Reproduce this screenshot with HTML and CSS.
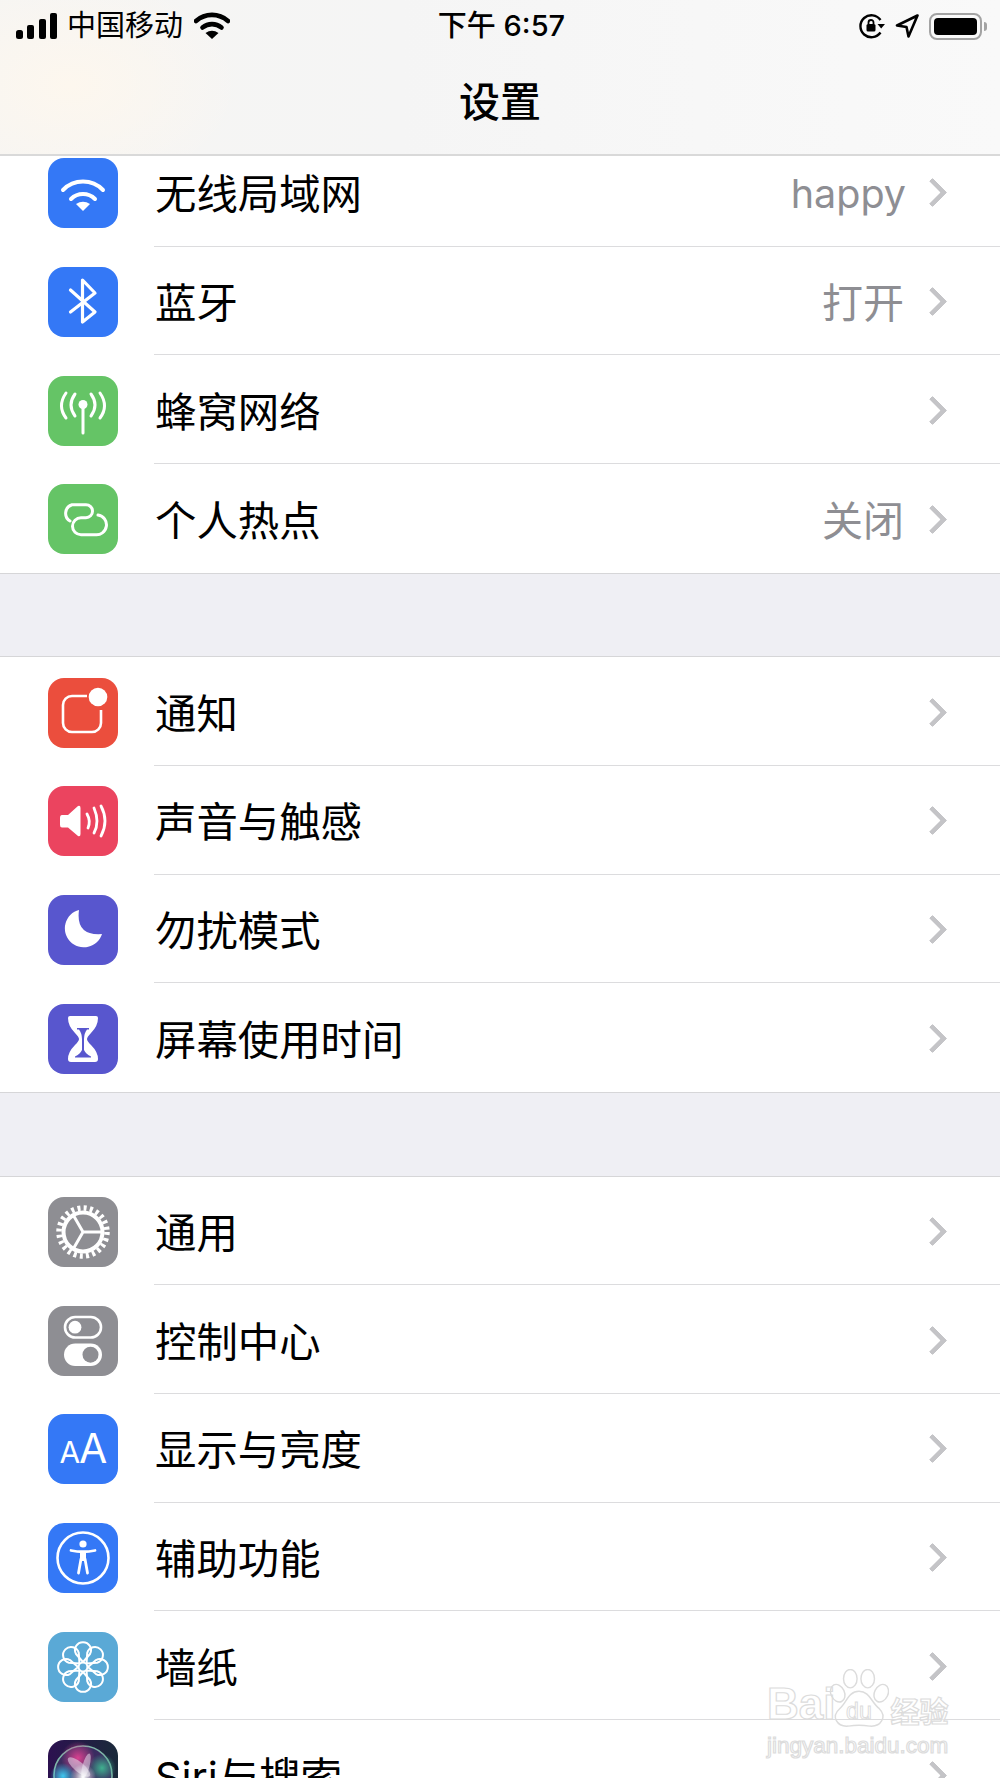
FILE: index.html
```html
<!DOCTYPE html>
<html lang="zh-CN">
<head>
    <meta charset="UTF-8">
    <meta name="viewport" content="width=device-width, initial-scale=1.0">
    <title>设置</title>
    <link rel="stylesheet" href="styles.css">
</head>
<body>
    <div class="screen">
        <header class="topbar">
            <div class="status">
                <div class="status-left">
                    <svg class="signal" width="42" height="26" viewBox="0 0 42 26">
                        <rect x="0" y="17" width="7" height="9" rx="2.5"/>
                        <rect x="11" y="12" width="7" height="14" rx="2"/>
                        <rect x="23" y="6" width="7" height="20" rx="2"/>
                        <rect x="34" y="0" width="7" height="26" rx="2"/>
                    </svg>
                    <span class="carrier">中国移动</span>
                    <svg class="status-wifi" width="36" height="28" viewBox="0 0 36 28">
                        <path d="M2 9 A24 24 0 0 1 34 9" fill="none" stroke="#000" stroke-width="4.6" stroke-linecap="round"/>
                        <path d="M8.5 15.5 A15 15 0 0 1 27.5 15.5" fill="none" stroke="#000" stroke-width="4.6" stroke-linecap="round"/>
                        <path d="M18 27 L11.5 21 Q18 16.5 24.5 21 Z"/>
                    </svg>
                </div>
                <span class="clock">下午 6:57</span>
                <div class="status-right">
                    <svg width="28" height="26" viewBox="0 0 28 26">
                        <path d="M22.5 7 A11 11 0 1 0 22.5 19.5" fill="none" stroke="#000" stroke-width="2.4"/>
                        <path d="M19.5 11 H27 L23.2 15.5 Z"/>
                        <rect x="8.5" y="11" width="9" height="7.5" rx="1.5"/>
                        <path d="M10.5 11 V9.5 A2.5 2.5 0 0 1 15.5 9.5 V11" fill="none" stroke="#000" stroke-width="1.8"/>
                    </svg>
                    <svg class="arrow" width="24" height="26" viewBox="0 0 24 26">
                        <path d="M22.5 2.5 L2 12.5 L11.5 14 L13.5 23.5 Z" fill="none" stroke="#000" stroke-width="2.6" stroke-linejoin="round"/>
                    </svg>
                    <div class="battery"><div class="battery-fill"></div></div>
                    <div class="battery-cap"></div>
                </div>
            </div>
            <h1 class="title">设置</h1>
        </header>

        <main class="list">
            <section class="group">
                <div class="row">
                    <svg class="icon" viewBox="0 0 70 70">
                        <rect width="70" height="70" rx="16" fill="#3478f6"/>
                        <g fill="none" stroke="#fff" stroke-width="4" stroke-linecap="round">
                            <path d="M15 32 A28 28 0 0 1 55 32"/>
                            <path d="M23 41 A17 17 0 0 1 47 41"/>
                        </g>
                        <path d="M35 53 L28 46 Q35 41.5 42 46 Z" fill="#fff"/>
                    </svg>
                    <div class="row-body">
                        <span class="label">无线局域网</span>
                        <span class="value value-latin">happy</span>
                        <span class="chevron"></span>
                    </div>
                </div>
                <div class="row">
                    <svg class="icon" viewBox="0 0 70 70">
                        <rect width="70" height="70" rx="16" fill="#3478f6"/>
                        <path d="M22.5 23 L47 45 L34.5 55 V13 L47 26 L22.5 45" fill="none" stroke="#fff" stroke-width="3.2" stroke-linecap="round" stroke-linejoin="round"/>
                    </svg>
                    <div class="row-body">
                        <span class="label">蓝牙</span>
                        <span class="value">打开</span>
                        <span class="chevron"></span>
                    </div>
                </div>
                <div class="row">
                    <svg class="icon" viewBox="0 0 70 70">
                        <rect width="70" height="70" rx="16" fill="#65c466"/>
                        <circle cx="35" cy="28.5" r="4.5" fill="#fff"/>
                        <g fill="none" stroke="#fff" stroke-width="3" stroke-linecap="round">
                            <path d="M35 30 V57"/>
                            <path d="M27 18 Q19 29 27 40"/>
                            <path d="M18 17 Q9 30 18 42"/>
                            <path d="M43 18 Q51 29 43 40"/>
                            <path d="M52 17 Q61 30 52 42"/>
                        </g>
                    </svg>
                    <div class="row-body">
                        <span class="label">蜂窝网络</span>
                        <span class="chevron"></span>
                    </div>
                </div>
                <div class="row">
                    <svg class="icon" viewBox="0 0 70 70">
                        <rect width="70" height="70" rx="16" fill="#65c466"/>
                        <path d="M22 37 A9 9 0 0 1 24 20.7 H38 A6.5 6.5 0 0 1 38 33.7 H33 A8.5 8.5 0 0 0 33 50.7 H47 A9.5 9.5 0 0 0 50 31" fill="none" stroke="#fff" stroke-width="3" stroke-linecap="round"/>
                    </svg>
                    <div class="row-body">
                        <span class="label">个人热点</span>
                        <span class="value">关闭</span>
                        <span class="chevron"></span>
                    </div>
                </div>
            </section>

            <section class="group">
                <div class="row">
                    <svg class="icon" viewBox="0 0 70 70">
                        <rect width="70" height="70" rx="16" fill="#eb4e3d"/>
                        <path d="M39 18 H24 A9 9 0 0 0 15 27 V45 A9 9 0 0 0 24 54 H44 A9 9 0 0 0 53 45 V32" fill="none" stroke="#fff" stroke-width="2.6"/>
                        <circle cx="50" cy="19" r="9.3" fill="#fff"/>
                    </svg>
                    <div class="row-body">
                        <span class="label">通知</span>
                        <span class="chevron"></span>
                    </div>
                </div>
                <div class="row">
                    <svg class="icon" viewBox="0 0 70 70">
                        <rect width="70" height="70" rx="16" fill="#eb445f"/>
                        <path d="M14 29 H20 L30 20 Q32.5 19 32.5 22 V48 Q32.5 51 30 50 L20 41.5 H14 Q12 41.5 12 39 V32 Q12 29 14 29 Z" fill="#fff"/>
                        <g fill="none" stroke="#fff" stroke-width="2.8" stroke-linecap="round">
                            <path d="M39 28 Q43 35 40 42"/>
                            <path d="M46 22 Q52 36 46 47"/>
                            <path d="M53 20 Q61 35 53 50"/>
                        </g>
                    </svg>
                    <div class="row-body">
                        <span class="label">声音与触感</span>
                        <span class="chevron"></span>
                    </div>
                </div>
                <div class="row">
                    <svg class="icon" viewBox="0 0 70 70">
                        <rect width="70" height="70" rx="16" fill="#5856ce"/>
                        <path d="M31 15 A19 19 0 1 0 54 39 Q27.5 41 31 15 Z" fill="#fff"/>
                    </svg>
                    <div class="row-body">
                        <span class="label">勿扰模式</span>
                        <span class="chevron"></span>
                    </div>
                </div>
                <div class="row">
                    <svg class="icon" viewBox="0 0 70 70">
                        <rect width="70" height="70" rx="16" fill="#5856ce"/>
                        <path d="M22 12 H48 Q50 12 50 14 Q50 22 43 29 Q39 33 39 35 Q39 37 43 41 Q50 48 50 55 Q50 58 47 58 H23 Q20 58 20 55 Q20 48 27 41 Q31 37 31 35 Q31 33 27 29 Q20 22 20 14 Q20 12 22 12 Z" fill="#fff"/>
                        <path d="M29 24 H41 V25.5 H39 Q36.2 29 36 35 V46 Q38 50 43 52.5 V53.5 H27 V52.5 Q32 50 34 46 V35 Q33.8 29 31 25.5 H29 Z" fill="#5856ce"/>
                    </svg>
                    <div class="row-body">
                        <span class="label">屏幕使用时间</span>
                        <span class="chevron"></span>
                    </div>
                </div>
            </section>

            <section class="group">
                <div class="row">
                    <svg class="icon" viewBox="0 0 70 70">
                        <rect width="70" height="70" rx="16" fill="#8e8e93"/>
                        <g fill="none" stroke="#fff">
                            <circle cx="35" cy="35" r="24" stroke-width="5.5" stroke-dasharray="3 3.28"/>
                            <circle cx="35" cy="35" r="19.5" stroke-width="4"/>
                            <path d="M35 35 H54 M35 35 L25.5 18.5 M35 35 L25.5 51.5" stroke-width="3"/>
                        </g>
                    </svg>
                    <div class="row-body">
                        <span class="label">通用</span>
                        <span class="chevron"></span>
                    </div>
                </div>
                <div class="row">
                    <svg class="icon" viewBox="0 0 70 70">
                        <rect width="70" height="70" rx="16" fill="#8e8e93"/>
                        <rect x="17" y="11" width="36" height="20.5" rx="10.2" fill="none" stroke="#fff" stroke-width="2.6"/>
                        <circle cx="27" cy="21.2" r="6.4" fill="#fff"/>
                        <rect x="16" y="37.5" width="38" height="22.5" rx="11.2" fill="#fff"/>
                        <circle cx="42.5" cy="48.7" r="8" fill="#8e8e93"/>
                    </svg>
                    <div class="row-body">
                        <span class="label">控制中心</span>
                        <span class="chevron"></span>
                    </div>
                </div>
                <div class="row">
                    <svg class="icon" viewBox="0 0 70 70">
                        <rect width="70" height="70" rx="16" fill="#3478f6"/>
                        <text class="icon-text" x="11.5" y="49" font-size="30">A</text>
                        <text class="icon-text" x="31" y="49" font-size="41">A</text>
                    </svg>
                    <div class="row-body">
                        <span class="label">显示与亮度</span>
                        <span class="chevron"></span>
                    </div>
                </div>
                <div class="row">
                    <svg class="icon" viewBox="0 0 70 70">
                        <rect width="70" height="70" rx="16" fill="#3478f6"/>
                        <circle cx="35" cy="35" r="25.5" fill="none" stroke="#fff" stroke-width="2.6"/>
                        <circle cx="35" cy="21" r="3.6" fill="#fff"/>
                        <path d="M32 29 H38 V38 H32 Z" fill="#fff"/>
                        <path d="M23 27.5 Q35 30 47 27.5 M33 36 L30.5 50 M37 36 L39.5 50" fill="none" stroke="#fff" stroke-width="2.8" stroke-linecap="round"/>
                    </svg>
                    <div class="row-body">
                        <span class="label">辅助功能</span>
                        <span class="chevron"></span>
                    </div>
                </div>
                <div class="row">
                    <svg class="icon" viewBox="0 0 70 70">
                        <defs>
                            <path id="petal" d="M35 30 L28 22 A8 8 0 1 1 42 22 Z"/>
                        </defs>
                        <rect width="70" height="70" rx="16" fill="#5aa9d6"/>
                        <g fill="none" stroke="#fff" stroke-width="2" stroke-linejoin="round">
                            <use href="#petal"/>
                            <use href="#petal" transform="rotate(45 35 35)"/>
                            <use href="#petal" transform="rotate(90 35 35)"/>
                            <use href="#petal" transform="rotate(135 35 35)"/>
                            <use href="#petal" transform="rotate(180 35 35)"/>
                            <use href="#petal" transform="rotate(225 35 35)"/>
                            <use href="#petal" transform="rotate(270 35 35)"/>
                            <use href="#petal" transform="rotate(315 35 35)"/>
                            <circle cx="35" cy="35" r="4.4" fill="#5aa9d6"/>
                        </g>
                    </svg>
                    <div class="row-body">
                        <span class="label">墙纸</span>
                        <span class="chevron"></span>
                    </div>
                </div>
                <div class="row">
                    <svg class="icon" viewBox="0 0 70 70">
                        <defs>
                            <radialGradient id="siriPink">
                                <stop offset="0" stop-color="#d8408f"/>
                                <stop offset="1" stop-color="#d8408f" stop-opacity="0"/>
                            </radialGradient>
                            <radialGradient id="siriGreen">
                                <stop offset="0" stop-color="#3fb08f"/>
                                <stop offset="1" stop-color="#3fb08f" stop-opacity="0"/>
                            </radialGradient>
                            <radialGradient id="siriCyan">
                                <stop offset="0" stop-color="#3fc8f0"/>
                                <stop offset="1" stop-color="#3fc8f0" stop-opacity="0"/>
                            </radialGradient>
                            <radialGradient id="siriCore">
                                <stop offset="0" stop-color="#fff"/>
                                <stop offset="1" stop-color="#fff" stop-opacity="0"/>
                            </radialGradient>
                            <linearGradient id="siriBack" x1="0" y1="0" x2="1" y2="0">
                                <stop offset="0" stop-color="#2c1150"/>
                                <stop offset="1" stop-color="#1a2a3a"/>
                            </linearGradient>
                        </defs>
                        <rect width="70" height="70" rx="16" fill="url(#siriBack)"/>
                        <circle cx="35" cy="35" r="29" fill="#3a2c60" stroke="#7fb5a8" stroke-width="1.6"/>
                        <circle cx="30" cy="18" r="17" fill="url(#siriPink)"/>
                        <circle cx="54" cy="28" r="14" fill="url(#siriGreen)"/>
                        <circle cx="15" cy="36" r="13" fill="url(#siriCyan)"/>
                        <ellipse cx="31" cy="27" rx="5" ry="14" fill="#e6dcec" opacity="0.55" transform="rotate(-50 31 27)"/>
                        <ellipse cx="38" cy="26" rx="3.5" ry="13" fill="#e6dcec" opacity="0.55" transform="rotate(15 38 26)"/>
                        <circle cx="35" cy="37" r="13" fill="url(#siriCore)"/>
                    </svg>
                    <div class="row-body">
                        <span class="label">Siri与搜索</span>
                        <span class="chevron"></span>
                    </div>
                </div>
            </section>
        </main>

        <!-- site watermark, sits above the last rows -->
        <div class="watermark">
            <div class="wm-top">
                <span>Bai</span>
                <svg class="wm-paw" width="60" height="60" viewBox="0 0 62 62">
                    <g fill="none" stroke="#dcdcdc" stroke-width="1.5">
                        <ellipse cx="9" cy="25" rx="7" ry="9.5" transform="rotate(-25 9 25)"/>
                        <ellipse cx="22" cy="10" rx="7" ry="9.5"/>
                        <ellipse cx="40" cy="10" rx="7" ry="9.5"/>
                        <ellipse cx="54" cy="25" rx="7" ry="9.5" transform="rotate(25 54 25)"/>
                        <path d="M31 23 C42 23 44 35 52 41 C60 49 54 60 42 59 C36 58 26 58 20 59 C8 60 2 49 11 41 C18 35 20 23 31 23 Z"/>
                    </g>
                    <text class="wm-du" x="31" y="52">du</text>
                </svg>
                <span class="wm-cn">经验</span>
            </div>
            <div class="wm-url">jingyan.baidu.com</div>
        </div>
    </div>
</body>
</html>
```
FILE: styles.css
```css
* {
    box-sizing: border-box;
}
html,
body {
    margin: 0;
    height: 100%;
}
body {
    background-color: #efeff4;
    color: #000;
    font-family: "Inter", "Noto Sans CJK SC", sans-serif;
    overflow: hidden;
}
.screen {
    position: relative;
    width: 1000px;
    height: 1778px;
    overflow: hidden;
}

/* top bar */
.topbar {
    position: relative;
    z-index: 2;
    height: 156px;
    padding: 8px 0 0;
    background:
        radial-gradient(ellipse 170px 110px at 70px 85px, #fdf7ee 0%, rgba(253, 247, 238, 0) 100%),
        linear-gradient(90deg, #f6f5f3 0%, #f5f5f5 40%, #f9f9f9 100%);
    border-bottom: 2px solid #d9d9d9;
}
.status {
    display: grid;
    grid-template-columns: 1fr auto 1fr;
    align-items: center;
    height: 36px;
    padding: 0 13px 0 16px;
}
.status-left,
.status-right {
    display: flex;
    align-items: center;
}
.status-right {
    justify-content: flex-end;
}
.carrier {
    margin-left: 9px;
    font-size: 29px;
    line-height: 36px;
}
.status-wifi {
    margin-left: 11px;
}
.clock {
    font-size: 29px;
    font-weight: 500;
    line-height: 36px;
}
.arrow {
    margin-left: 9px;
}
.battery {
    width: 53px;
    height: 27px;
    margin-left: 10px;
    padding: 3px;
    border: 2px solid #a3a3a3;
    border-radius: 8px;
}
.battery-fill {
    height: 100%;
    background-color: #000;
    border-radius: 4px;
}
.battery-cap {
    width: 3px;
    height: 9px;
    margin-left: 2px;
    background-color: #a3a3a3;
    border-radius: 0 3px 3px 0;
}
.title {
    margin: 28px 0 0;
    font-size: 41px;
    font-weight: 500;
    line-height: 60px;
    text-align: center;
}

/* settings list, scrolled a little under the bar */
.list {
    margin-top: -19px;
}
.group {
    background-color: #fff;
    border-top: 1.5px solid #d6d6d8;
    border-bottom: 1.5px solid #d6d6d8;
}
.group + .group {
    margin-top: 82.5px;
}
.row {
    display: flex;
    align-items: center;
    height: 108.7px;
    padding-left: 48px;
}
.icon {
    flex: none;
    width: 70px;
    height: 70px;
    margin-top: 2px;
}
.row-body {
    display: flex;
    flex: 1;
    align-items: center;
    height: 100%;
    margin-left: 36px;
    padding-right: 53px;
    border-bottom: 1.5px solid #dcdcde;
}
.row:last-child .row-body {
    border-bottom: 0;
}
.label {
    flex: 1;
    margin: 5px 0 0 1px;
    font-size: 41.4px;
    line-height: 60px;
}
.value {
    margin: 5px 18px 0 0;
    color: #8e8e93;
    font-size: 41px;
    line-height: 60px;
}
.value-latin {
    margin-right: 16px;
    font-size: 39.5px;
}
.chevron {
    flex: none;
    width: 21px;
    height: 21px;
    margin: 2px 4px 0 0;
    border-top: 5px solid #c4c4c7;
    border-right: 5px solid #c4c4c7;
    border-radius: 2px;
    transform: rotate(45deg);
}
.icon-text {
    fill: #fff;
    font-family: "Inter", sans-serif;
    font-weight: 400;
}

/* watermark */
.watermark {
    position: absolute;
    left: 767px;
    top: 1669px;
    width: 182px;
    color: rgba(255, 255, 255, 0.4);
    -webkit-text-stroke: 1.2px #dcdcdc;
}
.wm-top {
    display: flex;
    align-items: flex-end;
    height: 60px;
    font-family: "Liberation Sans", sans-serif;
    font-size: 44px;
    font-weight: 700;
    line-height: 50px;
    white-space: nowrap;
}
.wm-paw {
    flex: none;
    margin-left: -6px;
}
.wm-du {
    fill: none;
    font-family: "Liberation Sans", sans-serif;
    font-size: 24px;
    font-weight: 400;
    text-anchor: middle;
    stroke: #dcdcdc;
    stroke-width: 1;
}
.wm-cn {
    flex: none;
    margin-left: 1px;
    font-family: "Noto Sans CJK SC", sans-serif;
    font-size: 29px;
    line-height: 38px;
}
.wm-url {
    margin-top: 4px;
    font-family: "Liberation Sans", sans-serif;
    font-size: 22.5px;
    line-height: 26px;
    white-space: nowrap;
}
```
